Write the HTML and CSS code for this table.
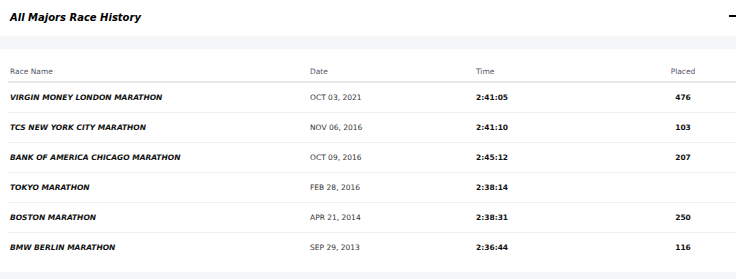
FILE: index.html
```html
<!DOCTYPE html>
<html>
<head>
<meta charset="utf-8">
<link rel="stylesheet" href="styles.css">
</head>
<body>
<div class="panel">
  <div class="panel-head">
    <h2 class="panel-title">All Majors Race History</h2>
    <span class="toggle"></span>
  </div>
  <div class="band"></div>
  <table class="history">
    <colgroup>
      <col class="c-name"><col class="c-date"><col class="c-time"><col class="c-place">
    </colgroup>
    <thead>
      <tr><th>Race Name</th><th>Date</th><th>Time</th><th class="place">Placed</th></tr>
    </thead>
    <tbody>
      <tr><td class="name">VIRGIN MONEY LONDON MARATHON</td><td class="date">OCT 03, 2021</td><td class="time">2:41:05</td><td class="place">476</td></tr>
      <tr><td class="name">TCS NEW YORK CITY MARATHON</td><td class="date">NOV 06, 2016</td><td class="time">2:41:10</td><td class="place">103</td></tr>
      <tr><td class="name">BANK OF AMERICA CHICAGO MARATHON</td><td class="date">OCT 09, 2016</td><td class="time">2:45:12</td><td class="place">207</td></tr>
      <tr><td class="name">TOKYO MARATHON</td><td class="date">FEB 28, 2016</td><td class="time">2:38:14</td><td class="place"></td></tr>
      <tr><td class="name">BOSTON MARATHON</td><td class="date">APR 21, 2014</td><td class="time">2:38:31</td><td class="place">250</td></tr>
      <tr><td class="name">BMW BERLIN MARATHON</td><td class="date">SEP 29, 2013</td><td class="time">2:36:44</td><td class="place">116</td></tr>
    </tbody>
  </table>
  <div class="band band-bottom"></div>
</div>
</body>
</html>
```
FILE: styles.css
```css
html, body {
  margin: 0;
  padding: 0;
  background: #ffffff;
  font-family: "DejaVu Sans", "Open Sans", sans-serif;
  color: #111;
  overflow: hidden;
}
.panel {
  width: 736px;
}
.panel-head {
  height: 34px;
  padding: 0 0 2px 10px;
  display: flex;
  align-items: center;
  justify-content: space-between;
}
.panel-title {
  margin: 0;
  font-size: 10px;
  font-weight: 800;
  font-style: italic;
  color: #000;
}
.toggle {
  width: 8px;
  height: 2px;
  background: #000;
  margin-right: -1px;
  margin-top: -3px;
}
.band {
  height: 13px;
  background: #f5f6f8;
}
.band-bottom {
  margin-top: 10px;
  height: 8px;
}
.history {
  margin: 13px 0 0 8px;
  width: 728px;
  border-collapse: collapse;
  table-layout: fixed;
}
.c-name { width: 300px; }
.c-date { width: 166px; }
.c-time { width: 156px; }
.c-place { width: 106px; }
.history th {
  height: 19px;
  padding: 0 0 0 2px;
  text-align: left;
  vertical-align: middle;
  font-size: 7.5px;
  font-weight: 400;
  color: #55556a;
  border-bottom: 2px solid #e8e9ec;
}
.history td {
  height: 29px;
  padding: 0 0 0 2px;
  vertical-align: middle;
  font-size: 7.5px;
  border-bottom: 1px solid #eeeff1;
}
.history tbody tr:last-child td {
  border-bottom: none;
}
.history .place {
  text-align: center;
  padding-left: 0;
}
.name {
  font-weight: 700;
  font-style: italic;
  color: #111;
}
.date {
  color: #333;
}
.time, td.place {
  font-weight: 700;
  color: #111;
}
```
